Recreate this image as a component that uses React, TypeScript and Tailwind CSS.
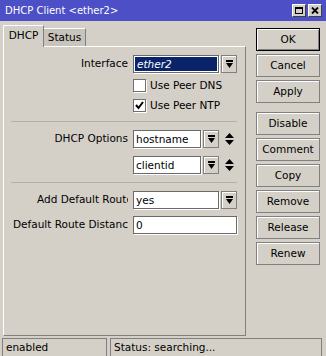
import React from 'react';

// raised win-style dropdown button
const DropBtn = () => (
  <div className="flex h-[18px] w-[16px] shrink-0 items-center justify-center border border-[#808080] bg-[#d4d0c8] shadow-[inset_1px_1px_0_#fff]">
    <svg width="7" height="9" viewBox="0 0 7 9">
      <rect x="0" y="0" width="7" height="2" fill="#000" />
      <path d="M0 3h7L3.5 8z" fill="#000" />
    </svg>
  </div>
);

const UpDown = () => (
  <svg width="9" height="15" viewBox="0 0 9 15" className="ml-[6px]">
    <path d="M4.5 1L9 6H0z M0 8h9L4.5 13z" fill="#000" />
  </svg>
);

const Field = ({ value, width }: { value: string; width: string }) => (
  <div
    className={
      'h-[18px] shrink-0 overflow-hidden whitespace-nowrap border border-[#6a6a6a] bg-white pl-[2px] leading-[16px] shadow-[1px_1px_0_#fff] ' +
      width
    }
  >
    {value}
  </div>
);

const Label = ({ text, indent }: { text: string; indent?: string }) => (
  <div
    className={
      'w-[124px] shrink-0 overflow-hidden whitespace-nowrap ' +
      (indent ? indent + ' text-left' : 'text-right')
    }
  >
    {text}
  </div>
);

const Check = ({ label, checked }: { label: string; checked?: boolean }) => (
  <div className="ml-[129px] flex h-[13px] items-center">
    <div className="flex h-[13px] w-[13px] items-center justify-center border border-[#707070] bg-white shadow-[1px_1px_0_#fff]">
      {checked && (
        <svg width="9" height="9" viewBox="0 0 9 9">
          <path d="M1 4l2.5 3L8 1" stroke="#000" strokeWidth="2" fill="none" />
        </svg>
      )}
    </div>
    <span className="ml-[4px]">{label}</span>
  </div>
);

const Sep = () => <div className="ml-[7px] h-px w-[226px] bg-[#b4b0a8]" />;

const buttons = ['Disable', 'Comment', 'Copy', 'Remove', 'Release', 'Renew'];

const Btn = ({ text, main }: { text: string; main?: boolean }) => (
  <div
    className={
      'flex h-[23px] w-[64px] items-center justify-center bg-[#d4d0c8] ' +
      (main
        ? 'border border-black shadow-[inset_1px_1px_0_#fff,inset_-1px_-1px_0_#808080]'
        : 'border border-[#808080] shadow-[inset_1px_1px_0_#fff]')
    }
  >
    {text}
  </div>
);

export default function App() {
  return (
    <div className="flex h-[356px] w-[326px] flex-col overflow-hidden bg-[#d4d0c8] font-['DejaVu_Sans',sans-serif] text-[10.5px] text-black">
      {/* title bar */}
      <div className="flex h-[21px] shrink-0 items-center bg-[#4c4fc6] pl-[5px] text-[10px] text-white">
        <span>DHCP Client &lt;ether2&gt;</span>
        <div className="ml-auto mr-[4px] flex gap-[2px]">
          <div className="flex h-[13px] w-[14px] items-center justify-center border border-t-white border-l-white border-r-[#404040] border-b-[#404040] bg-[#d4d0c8]">
            <svg width="8" height="7" viewBox="0 0 8 7">
              <rect x="0.5" y="0.5" width="7" height="6" fill="none" stroke="#000" />
              <rect x="0" y="0" width="8" height="2" fill="#000" />
            </svg>
          </div>
          <div className="flex h-[13px] w-[14px] items-center justify-center border border-t-white border-l-white border-r-[#404040] border-b-[#404040] bg-[#d4d0c8]">
            <svg width="8" height="7" viewBox="0 0 8 7">
              <path d="M1 0.5l6 6M7 0.5l-6 6" stroke="#000" strokeWidth="1.8" />
            </svg>
          </div>
        </div>
      </div>

      <div className="flex flex-1">
        {/* tabs + panel */}
        <div className="flex w-[246px] flex-col pl-[3px] pt-[4px]">
          <div className="flex h-[21px] items-end">
            <div className="relative z-10 -mb-px flex h-[22px] w-[41px] items-center justify-center border-l border-t border-r border-l-white border-t-white border-r-[#808080] bg-[#d4d0c8] pb-[1px]">
              DHCP
            </div>
            <div className="flex h-[18px] w-[42px] items-center justify-center border-t border-r border-t-white border-r-[#808080] bg-[#c8c4bc]">
              Status
            </div>
          </div>
          <div className="flex flex-1 flex-col border border-t-white border-l-white border-r-[#808080] border-b-[#808080]">
            <div className="mt-[8px] flex items-center">
              <Label text="Interface" />
              <div className="ml-[5px] flex h-[18px] w-[86px] border border-[#6a6a6a] bg-white p-px shadow-[1px_1px_0_#fff]">
                <div className="flex-1 bg-[#0a246a] pl-[2px] leading-[14px] text-white italic">ether2</div>
              </div>
              <div className="ml-[2px]">
                <DropBtn />
              </div>
            </div>
            <div className="mt-[6px]">
              <Check label="Use Peer DNS" />
            </div>
            <div className="mt-[7px]">
              <Check label="Use Peer NTP" checked />
            </div>
            <div className="mt-[9px]">
              <Sep />
            </div>
            <div className="mt-[8px] flex items-center">
              <Label text="DHCP Options" />
              <div className="ml-[5px]">
                <Field value="hostname" width="w-[68px]" />
              </div>
              <div className="ml-[2px]">
                <DropBtn />
              </div>
              <UpDown />
            </div>
            <div className="mt-[8px] flex items-center">
              <div className="w-[129px] shrink-0" />
              <Field value="clientid" width="w-[68px]" />
              <div className="ml-[2px]">
                <DropBtn />
              </div>
              <UpDown />
            </div>
            <div className="mt-[8px]">
              <Sep />
            </div>
            <div className="mt-[8px] flex items-center">
              <Label text="Add Default Route" indent="pl-[33px]" />
              <div className="ml-[5px]">
                <Field value="yes" width="w-[86px]" />
              </div>
              <div className="ml-[2px]">
                <DropBtn />
              </div>
            </div>
            <div className="mt-[7px] flex items-center">
              <Label text="Default Route Distance" indent="pl-[9px]" />
              <div className="ml-[5px]">
                <Field value="0" width="w-[104px]" />
              </div>
            </div>
          </div>
        </div>

        {/* action buttons */}
        <div className="flex flex-col gap-[3px] pl-[10px] pt-[7px]">
          <Btn text="OK" main />
          <Btn text="Cancel" />
          <Btn text="Apply" />
          <div className="mt-[6px] flex flex-col gap-[3px]">
            {buttons.map((b) => (
              <Btn key={b} text={b} />
            ))}
          </div>
        </div>
      </div>

      {/* status bar */}
      <div className="mt-[2px] flex h-[18px] shrink-0 gap-[3px] pl-[2px] pr-[4px]">
        <div className="w-[105px] border border-b-0 border-[#808080] pl-[3px] leading-[17px]">enabled</div>
        <div className="flex-1 border border-b-0 border-[#808080] pl-[3px] leading-[17px]">Status: searching...</div>
      </div>
    </div>
  );
}
